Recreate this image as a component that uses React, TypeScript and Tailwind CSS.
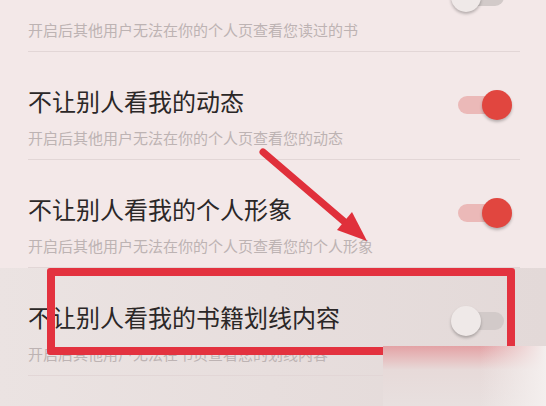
import React from 'react';

interface Setting {
  id: number;
  title?: string;
  desc: string;
  on: boolean;
}

const settings: Setting[] = [
  { id: 1, desc: '开启后其他用户无法在你的个人页查看您读过的书', on: false },
  { id: 2, title: '不让别人看我的动态', desc: '开启后其他用户无法在你的个人页查看您的动态', on: true },
  { id: 3, title: '不让别人看我的个人形象', desc: '开启后其他用户无法在你的个人页查看您的个人形象', on: true },
  { id: 4, title: '不让别人看我的书籍划线内容', desc: '开启后其他用户无法在书页查看您的划线内容', on: false },
];

const font = { fontFamily: '"Noto Sans CJK SC", "Noto Sans", sans-serif' };

const Toggle: React.FC<{ on: boolean; className?: string }> = ({ on, className = '' }) => (
  <div className={`flex items-center w-[61px] h-[30px] shrink-0 ${className}`}>
    <div
      className={`flex items-center w-[46px] h-[18px] ml-[7px] rounded-full ${
        on ? 'bg-[#ebb9b8] justify-end' : 'bg-[#d2cac9] justify-start'
      }`}
    >
      <div
        className={`w-[30px] h-[30px] shrink-0 rounded-full shadow-[0_2px_3px_rgba(0,0,0,0.25)] ${
          on ? '-mr-[8px] bg-[#e1463f]' : '-ml-[7px] bg-[#efe9e8]'
        }`}
      />
    </div>
  </div>
);

const Row: React.FC<{ item: Setting }> = ({ item }) => (
  <div className="pl-[28px] pr-[26px]">
    <div className="pt-[33px] pb-[11px] border-b border-[#e2d6d6]">
      <div className="flex items-start justify-between h-[32px]">
        <span className="text-[24px] leading-[32px] text-[#2b2727]">{item.title}</span>
        <Toggle on={item.on} className="mt-[5px] mr-[8px]" />
      </div>
      <div className="mt-[11px] text-[15px] leading-[20px] text-[#bdb3b3]">{item.desc}</div>
    </div>
  </div>
);

// first row is scrolled up: only the bottom of its switch and the note show
const CutRow: React.FC<{ item: Setting }> = ({ item }) => (
  <div className="pl-[28px] pr-[26px]">
    <div className="pb-[11px] border-b border-[#e2d6d6]">
      <div className="flex items-start justify-end h-[38px] -mt-[18px]">
        <Toggle on={item.on} className="mr-[8px]" />
      </div>
      <div className="text-[15px] leading-[20px] text-[#bdb3b3]">{item.desc}</div>
    </div>
  </div>
);

export default function App() {
  return (
    <div className="relative w-[546px] h-[406px] overflow-hidden bg-[#f3e8e8]" style={font}>
      <div>
        <CutRow item={settings[0]} />
        <Row item={settings[1]} />
        <Row item={settings[2]} />
        <div className="bg-linear-to-r from-[#ebe3e2] to-[#e3d9d8] h-[300px]">
          <Row item={settings[3]} />
        </div>
      </div>

      {/* annotation arrow */}
      <svg className="absolute left-0 top-0" width="546" height="406" viewBox="0 0 546 406">
        <line x1="263" y1="152" x2="347" y2="224" stroke="#e0303b" strokeWidth="7" strokeLinecap="round" />
        <polygon points="367,241 352,212 337,230" fill="#e0303b" />
      </svg>

      {/* annotation box */}
      <div className="absolute left-[47px] top-[268px] w-[468px] h-[87px] border-[8px] border-[#e3323f] rounded-[3px]" />

      {/* blurred watermark patch */}
      <div className="absolute left-[383px] top-[346px] w-[163px] h-[60px] bg-linear-to-b from-[#e3a2a5] via-[#e7dad9] via-40% to-[#e8e0df]" />
      <div className="absolute left-[480px] top-[346px] w-[66px] h-[60px] bg-linear-to-r from-transparent to-[#f4efee]" />
    </div>
  );
}
